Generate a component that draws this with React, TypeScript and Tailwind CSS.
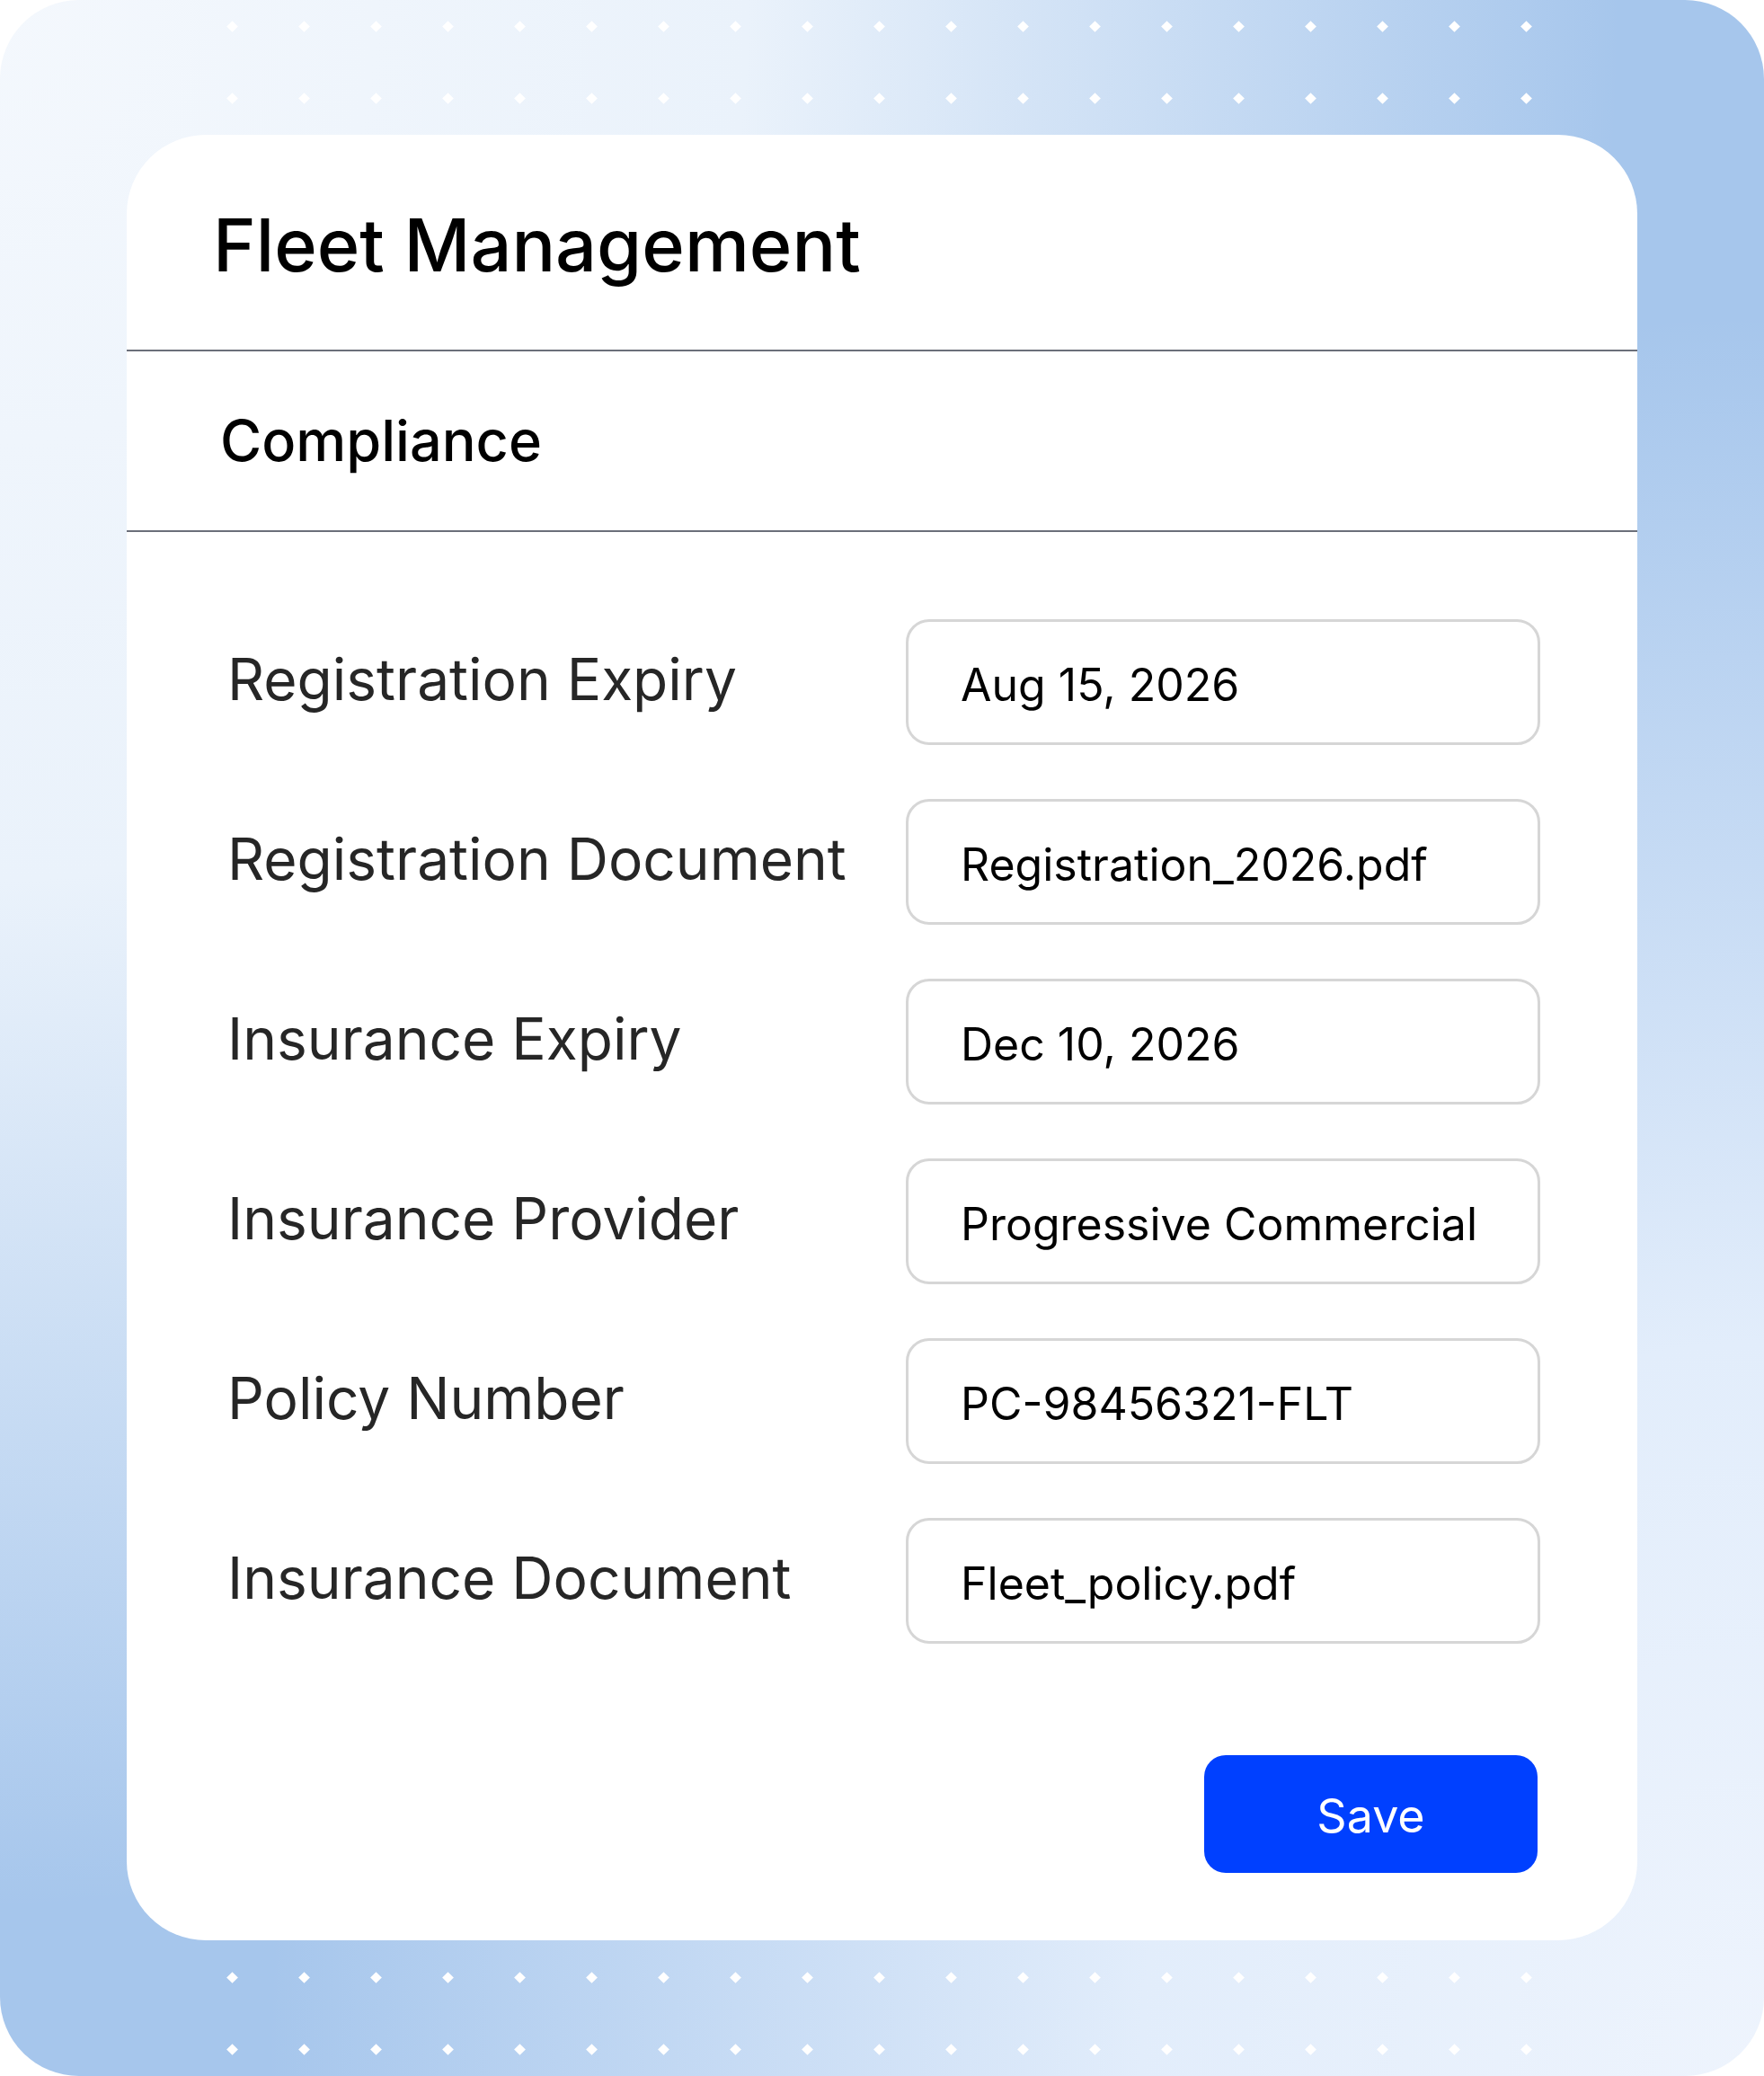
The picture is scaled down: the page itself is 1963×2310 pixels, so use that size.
import React from "react";

const rows = [
  ["Registration Expiry", "Aug 15, 2026"],
  ["Registration Document", "Registration_2026.pdf"],
  ["Insurance Expiry", "Dec 10, 2026"],
  ["Insurance Provider", "Progressive Commercial"],
  ["Policy Number", "PC-98456321-FLT"],
  ["Insurance Document", "Fleet_policy.pdf"],
];

function DotRow() {
  return (
    <div className="flex h-[10px] pl-[253px] gap-[70px]">
      {Array.from({ length: 19 }).map((_, i) => (
        <div key={i} className="w-[10px] h-[10px] flex items-center justify-center">
          <div className="w-[9px] h-[9px] bg-white rotate-45" />
        </div>
      ))}
    </div>
  );
}

export default function App() {
  return (
    <div className="w-[1963px] h-[2310px] bg-white" style={{ fontFamily: "Inter, 'Noto Sans', sans-serif" }}>
      <div className="w-full h-full rounded-[88px] overflow-hidden bg-[#a6c6ec] bg-[radial-gradient(ellipse_at_0%_0%,#f4f8fd_0%,#eaf2fb_30%,transparent_65%),radial-gradient(ellipse_at_100%_100%,#eef4fd_0%,#e2edfb_25%,transparent_60%)] flex flex-col">
        <div className="pt-[24px]"><DotRow /></div>
        <div className="mt-[70px]"><DotRow /></div>
        <div className="mt-[36px] mx-[141px] h-[2009px] bg-white rounded-[88px] flex flex-col">
          <div className="h-[241px] flex items-center pl-[96px] pt-[8px] border-b-2 border-[#6b6f7a]">
            <h1 className="text-[81px] font-medium text-black">Fleet Management</h1>
          </div>
          <div className="h-[201px] flex items-center pl-[104px] border-b-2 border-[#6b6f7a]">
            <h2 className="text-[63px] font-medium text-black">Compliance</h2>
          </div>
          <div className="pt-[97px] pl-[112px] pr-[108px] flex flex-col gap-[60px]">
            {rows.map(([l, v]) => (
              <div key={l} className="flex items-center">
                <div className="w-[755px] text-[64px] text-[#262626] pb-[6px]">{l}</div>
                <div className="flex-1 h-[140px] border-[3px] border-[#d6d6d6] rounded-[26px] flex items-center pl-[58px] text-[50px] text-black pt-[6px]">
                  {v}
                </div>
              </div>
            ))}
          </div>
          <div className="flex justify-end pr-[111px] mt-[124px]">
            <button className="w-[371px] h-[131px] bg-[#0040ff] rounded-[24px] text-white text-[52px] pt-[4px]">Save</button>
          </div>
        </div>
        <div className="mt-[36px]"><DotRow /></div>
        <div className="mt-[70px]"><DotRow /></div>
      </div>
    </div>
  );
}
